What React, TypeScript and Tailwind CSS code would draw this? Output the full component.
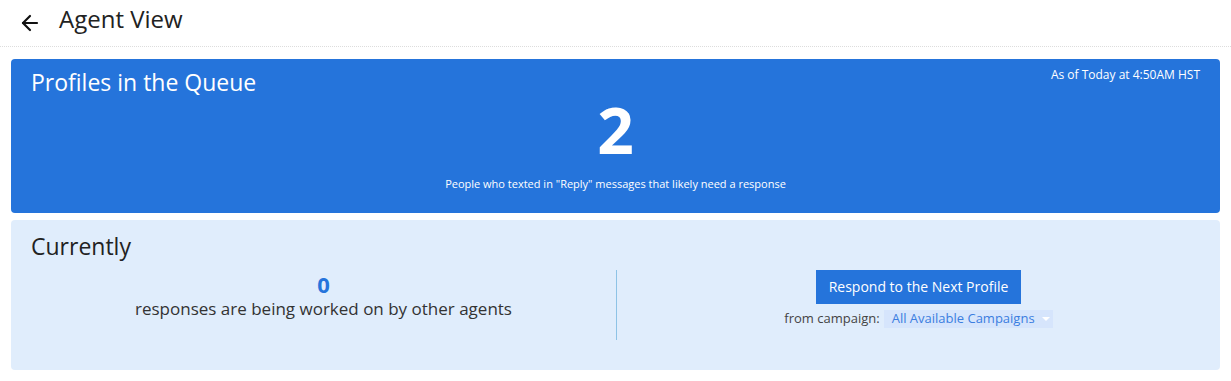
import { ArrowLeft } from "lucide-react";

export default function App() {
  return (
    <div
      className="min-h-screen bg-white text-[#222]"
      style={{ fontFamily: '"Open Sans", "Noto Sans", sans-serif' }}
    >
      {/* Header */}
      <div className="h-[47px] flex items-center px-[18px] border-b border-dotted border-[#ddd]">
        <ArrowLeft className="w-[24px] h-[24px] text-[#111]" strokeWidth={2.2} />
        <h1 className="ml-[17px] text-[24px] leading-none text-[#222] -mt-[9px]">Agent View</h1>
      </div>

      <div className="px-[11px] pt-[12px] pb-[11px] flex flex-col gap-[7px]">
        {/* Queue card */}
        <div className="bg-[#2574db] text-white rounded-[4px] h-[154px] px-[20px] pt-[6px]">
          <div className="flex justify-between items-start">
            <h2 className="text-[23px] leading-[34px]">Profiles in the Queue</h2>
            <div className="text-[12px] leading-[18px] pt-[1px]">As of Today at 4:50AM HST</div>
          </div>
          <div className="text-center text-[64px] font-bold leading-none -mt-[1px]">2</div>
          <div className="text-center text-[11px] leading-[16px] mt-[14px]">
            People who texted in "Reply" messages that likely need a response
          </div>
        </div>

        {/* Currently card */}
        <div className="bg-[#e0edfc] rounded-[4px] h-[150px] pl-[20px] pt-[11px]">
          <h2 className="text-[23px] leading-[30px] text-[#222]">Currently</h2>
          <div className="flex mt-[9px]">
            <div className="w-[585px] text-center">
              <div className="text-[22px] font-bold leading-[24px] text-[#2574db] mt-[2px]">0</div>
              <div className="text-[17px] leading-[22px] text-[#333] mt-[2px]">
                responses are being worked on by other agents
              </div>
            </div>
            <div className="w-px h-[70px] bg-[#8ec3e6]" />
            <div className="flex-1 flex flex-col items-center">
              <button className="bg-[#2574db] text-white text-[14px] h-[34px] px-[13px] leading-none">
                Respond to the Next Profile
              </button>
              <div className="flex items-center mt-[5px]">
                <span className="text-[13px] text-[#444] mr-[4px]">from campaign:</span>
                <div className="bg-[#d6e5fc] h-[18px] w-[169px] flex items-center justify-between pl-[8px] pr-[3px]">
                  <span className="text-[13px] text-[#3b7de0] leading-none">All Available Campaigns</span>
                  <span className="w-0 h-0 border-l-[4px] border-r-[4px] border-t-[4px] border-l-transparent border-r-transparent border-t-white" />
                </div>
              </div>
            </div>
          </div>
        </div>
      </div>
    </div>
  );
}
